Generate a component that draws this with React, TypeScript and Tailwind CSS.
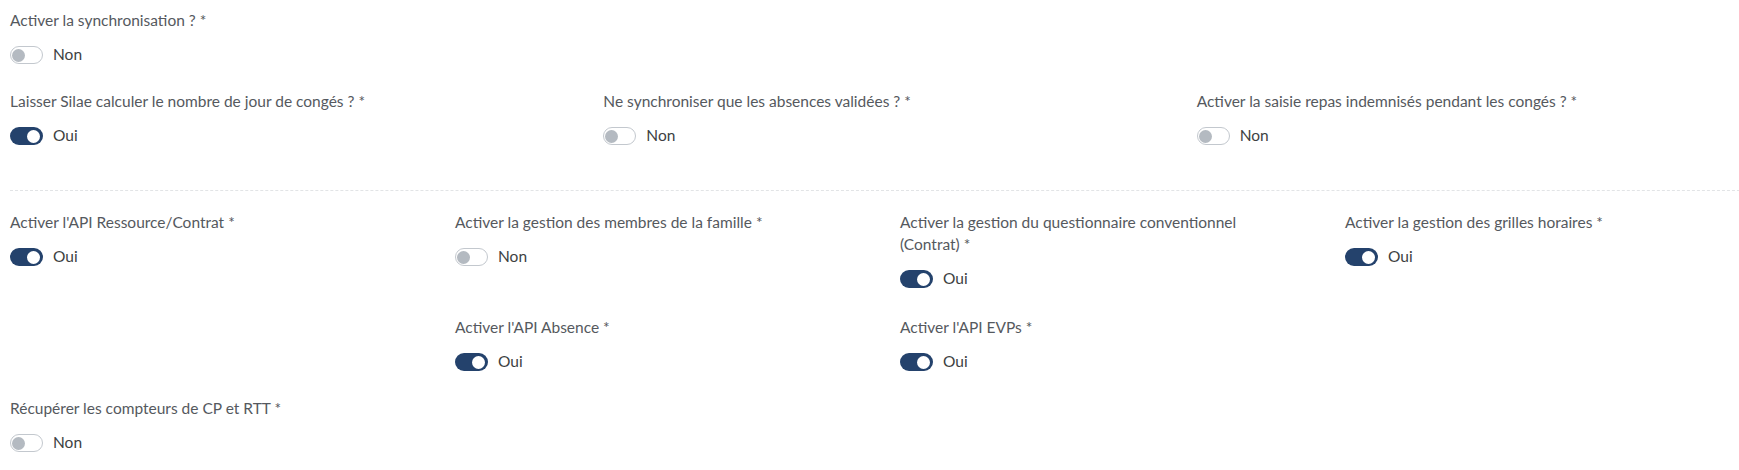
import React from "react";

type Field = {
  label: React.ReactNode;
  on: boolean;
  className?: string;
};

function Toggle({ on }: { on: boolean }) {
  if (on) {
    return (
      <span className="relative inline-flex h-[18px] w-[33px] shrink-0 items-center rounded-full bg-[#24426c]">
        <span className="absolute right-[3px] h-[13px] w-[13px] rounded-full bg-white" />
      </span>
    );
  }
  return (
    <span className="relative inline-flex h-[18px] w-[33px] shrink-0 items-center rounded-full border-[1.5px] border-[#c3c8ce] bg-white">
      <span className="absolute left-[1px] h-[13px] w-[13px] rounded-full bg-[#b4bac1]" />
    </span>
  );
}

function SwitchField({ label, on, className = "" }: Field) {
  return (
    <div className={`px-[10px] mb-[24px] ${className}`}>
      <div className="text-[15.5px] leading-[22px] text-[#55595e]">{label}</div>
      <div className="mt-[13px] flex h-[22px] items-center gap-[10px]">
        <Toggle on={on} />
        <span className="text-[15.5px] text-[#3d3f42]">{on ? "Oui" : "Non"}</span>
      </div>
    </div>
  );
}

export default function App() {
  return (
    <div
      className="w-full overflow-hidden bg-white"
      style={{ fontFamily: "Lato, 'Open Sans', sans-serif" }}
    >
      <div className="w-[1780px] pt-[9px]">
        {/* synchronisation */}
        <SwitchField label="Activer la synchronisation ? *" on={false} />

        <div className="grid grid-cols-3">
          <SwitchField
            label="Laisser Silae calculer le nombre de jour de congés ? *"
            on
          />
          <SwitchField
            label="Ne synchroniser que les absences validées ? *"
            on={false}
          />
          <SwitchField
            label="Activer la saisie repas indemnisés pendant les congés ? *"
            on={false}
          />
        </div>

        <div className="px-[10px] pt-[19px] pb-[20px]">
          <div className="border-t border-dashed border-[#e2e4e6]" />
        </div>

        {/* APIs */}
        <div className="grid grid-cols-4">
          <SwitchField label="Activer l'API Ressource/Contrat *" on />
          <SwitchField
            label="Activer la gestion des membres de la famille *"
            on={false}
          />
          <SwitchField
            label={
              <>
                Activer la gestion du questionnaire conventionnel
                <br />
                (Contrat) *
              </>
            }
            on
            className="pb-[2px]"
          />
          <SwitchField label="Activer la gestion des grilles horaires *" on />

          <SwitchField label="Activer l'API Absence *" on className="col-start-2" />
          <SwitchField label="Activer l'API EVPs *" on className="col-start-3" />

          <SwitchField
            label="Récupérer les compteurs de CP et RTT *"
            on={false}
            className="col-start-1"
          />
        </div>
      </div>
    </div>
  );
}
